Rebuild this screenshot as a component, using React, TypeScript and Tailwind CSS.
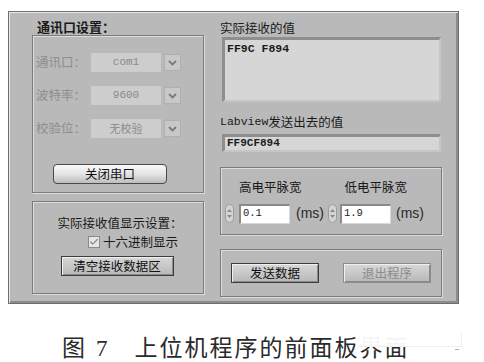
import { Check } from "lucide-react";

const cjk = { fontFamily: '"Noto Sans CJK SC", "Noto Sans", sans-serif' };
const mono = { fontFamily: '"Liberation Mono", "DejaVu Sans Mono", monospace' };

function Groove({ className, children }: { className: string; children?: React.ReactNode }) {
  return (
    <div
      className={`border border-[#7c7c7c] shadow-[inset_1px_1px_0_#dcdcdc,1px_1px_0_#dcdcdc] ${className}`}
    >
      {children}
    </div>
  );
}

function Combo({ label, value, monoValue }: { label: string; value: string; monoValue?: boolean }) {
  return (
    <div className="flex items-center h-[19px]">
      <span className="w-[55px] text-[12.5px] text-[#8e8e8e] leading-none" style={cjk}>
        {label}
      </span>
      <div
        className="w-[70px] h-[19px] bg-[#cdcdcd] flex items-center justify-center text-[11px] text-[#8a8a8a]"
        style={monoValue ? mono : cjk}
      >
        {value}
      </div>
      <div className="ml-[3px] w-[17px] h-[17px] bg-[#c8c8c8] border border-[#b0b0b0] flex items-center justify-center">
        <svg width="9" height="6" viewBox="0 0 9 6">
          <path d="M1 1 L4.5 4.5 L8 1" stroke="#7a7a7a" strokeWidth="1.8" fill="none" />
        </svg>
      </div>
    </div>
  );
}

function Spin() {
  return (
    <div className="w-[9px] h-[19px] rounded-full bg-[#d4d4d4] border border-[#9c9c9c] flex flex-col items-center justify-center gap-[3px]">
      <svg width="5" height="3" viewBox="0 0 5 3">
        <path d="M0 3 L2.5 0 L5 3 Z" fill="#8a8a8a" />
      </svg>
      <svg width="5" height="3" viewBox="0 0 5 3">
        <path d="M0 0 L2.5 3 L5 0 Z" fill="#8a8a8a" />
      </svg>
    </div>
  );
}

function NumField({ value }: { value: string }) {
  return (
    <div
      className="w-[51px] h-[20px] bg-white border-t-[2px] border-l-[2px] border-[#8a8a8a] border-r border-b border-r-[#d8d8d8] border-b-[#d8d8d8] text-[10.5px] text-[#222] flex items-center pl-[2px]"
      style={mono}
    >
      {value}
    </div>
  );
}

function FlatButton({ label, disabled, className }: { label: string; disabled?: boolean; className: string }) {
  return (
    <div
      className={`h-[20px] flex items-center justify-center border border-[#3c3c3c] bg-gradient-to-b from-[#d8d8d8] to-[#b8b8b8] shadow-[inset_1px_1px_0_#f0f0f0,inset_-1px_-1px_0_#8a8a8a] text-[12.5px] ${
        disabled ? "text-[#8c8c8c] border-[#8c8c8c]" : "text-[#111]"
      } ${className}`}
      style={cjk}
    >
      {label}
    </div>
  );
}

export default function App() {
  return (
    <div className="w-[484px] h-[362px] bg-white relative overflow-hidden">
      <div className="ml-[8px] mt-[11px] w-[451px] h-[293px] bg-[#b9b9b9] border border-[#6e6e6e] shadow-[inset_1px_1px_0_#e8e8e8,inset_-2px_-2px_0_#8c8c8c] flex gap-[16px] pl-[23px]">
        {/* left column */}
        <div className="w-[172px] flex flex-col">
          <div className="mt-[7px] ml-[5px] h-[16px] text-[13px] leading-[16px] font-semibold text-[#1a1a1a]" style={cjk}>
            通讯口设置：
          </div>
          <Groove className="h-[158px] flex flex-col pl-[3px] pt-[17px]">
            <div className="flex flex-col gap-[14px]">
              <Combo label="通讯口：" value="com1" monoValue />
              <Combo label="波特率：" value="9600" monoValue />
              <Combo label="校验位：" value="无校验" />
            </div>
            <div
              className="mt-[26px] ml-[17px] w-[114px] h-[20px] rounded-[4px] border border-[#4a4a4a] bg-gradient-to-b from-[#fafafa] via-[#e4e4e4] to-[#bdbdbd] flex items-center justify-center text-[12.5px] text-[#111]"
              style={cjk}
            >
              关闭串口
            </div>
          </Groove>
          <Groove className="mt-[8px] h-[93px] flex flex-col items-center pt-[13px]">
            <div className="h-[16px] text-[12.5px] leading-[16px] text-[#1a1a1a] ml-[4px]" style={cjk}>
              实际接收值显示设置：
            </div>
            <div className="mt-[3px] ml-[30px] flex items-center gap-[3px]">
              <div className="w-[12px] h-[12px] bg-[#e6e6e6] border border-[#8a8a8a] flex items-center justify-center">
                <Check size={10} strokeWidth={3} color="#8a8a8a" />
              </div>
              <span className="text-[12.5px] text-[#1a1a1a] leading-[16px]" style={cjk}>
                十六进制显示
              </span>
            </div>
            <FlatButton label="清空接收数据区" className="mt-[6px] w-[113px] mr-[2px]" />
          </Groove>
        </div>

        {/* right column */}
        <div className="w-[222px] flex flex-col">
          <div className="mt-[7px] h-[17px] text-[12.5px] leading-[17px] text-[#1a1a1a]" style={cjk}>
            实际接收的值
          </div>
          <div
            className="ml-[2px] mt-[1px] w-[219px] h-[65px] bg-[#d6d6d6] border-t-[3px] border-l-[3px] border-[#8e8e8e] border-r-[2px] border-b-[2px] border-r-[#c6c6c6] border-b-[#c6c6c6] pl-[2px] pt-[2px] text-[11.5px] font-bold leading-[14px] text-[#1c1c1c]"
            style={mono}
          >
            FF9C F894
          </div>
          <div className="mt-[12px] h-[16px] text-[12.5px] leading-[16px] text-[#1a1a1a] flex items-center">
            <span className="text-[11.5px]" style={mono}>
              Labview
            </span>
            <span style={cjk}>发送出去的值</span>
          </div>
          <div
            className="ml-[2px] mt-[4px] w-[219px] h-[18px] bg-[#d6d6d6] border-t-[3px] border-l-[3px] border-[#8e8e8e] border-r-[2px] border-b-[2px] border-r-[#c6c6c6] border-b-[#c6c6c6] pl-[2px] text-[11px] font-bold leading-[13px] text-[#1c1c1c]"
            style={mono}
          >
            FF9CF894
          </div>
          <Groove className="mt-[15px] h-[68px] flex flex-col pt-[11px]">
            <div className="flex h-[16px] text-[12.5px] leading-[16px] text-[#1a1a1a]" style={cjk}>
              <span className="ml-[18px]">高电平脉宽</span>
              <span className="ml-[43px]">低电平脉宽</span>
            </div>
            <div className="mt-[8px] flex items-center pl-[4px]">
              <Spin />
              <div className="ml-[5px]">
                <NumField value="0.1" />
              </div>
              <span className="ml-[6px] text-[14px] text-[#2a2a2a]" style={{ fontFamily: '"Liberation Sans", sans-serif' }}>
                (ms)
              </span>
              <div className="ml-[4px]">
                <Spin />
              </div>
              <div className="ml-[3px]">
                <NumField value="1.9" />
              </div>
              <span className="ml-[5px] text-[14px] text-[#2a2a2a]" style={{ fontFamily: '"Liberation Sans", sans-serif' }}>
                (ms)
              </span>
            </div>
          </Groove>
          <Groove className="mt-[14px] h-[48px] flex items-center justify-between px-[10px]">
            <FlatButton label="发送数据" className="w-[88px]" />
            <FlatButton label="退出程序" disabled className="w-[88px]" />
          </Groove>
        </div>
      </div>

      {/* caption */}
      <div
        className="mt-[32px] ml-[62px] flex items-center text-[23px] leading-[26px] text-[#2a2a2a]"
        style={{ fontFamily: '"Liberation Serif", "Noto Sans CJK SC", serif' }}
      >
        <span>图</span>
        <span className="ml-[11px]">7</span>
        <span className="ml-[27px] tracking-[2px]">上位机程序的前面板界面</span>
      </div>
      <div className="absolute left-[358px] top-[333px] w-[104px] h-[14px] bg-white/95 border-b border-r border-[#eeeeee]" />
      <div className="absolute left-[455px] top-[349px] w-[4px] h-[1px] bg-[#b0b0b0]" />
    </div>
  );
}
